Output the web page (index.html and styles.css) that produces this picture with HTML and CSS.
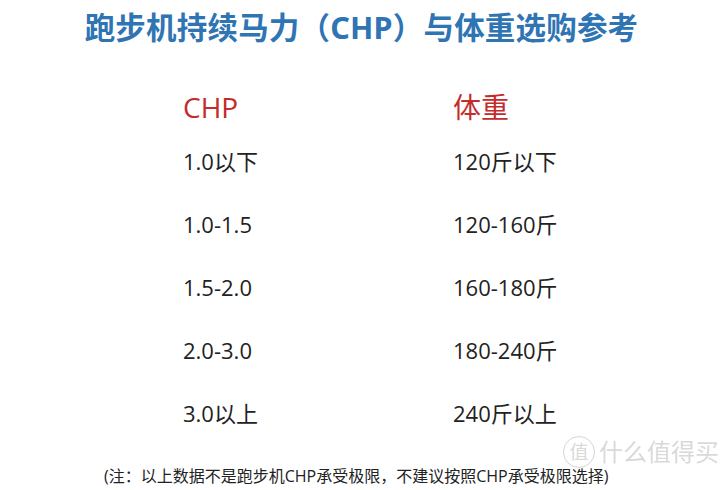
FILE: index.html
```html
<!DOCTYPE html>
<html lang="zh">
<head>
<meta charset="utf-8">
<link rel="stylesheet" href="styles.css">
</head>
<body>
<div class="page">
  <h1 class="title">跑步机持续马力（CHP）与体重选购参考</h1>
  <div class="table">
    <div class="head">CHP</div><div class="head">体重</div>
    <div class="cell">1.0以下</div><div class="cell">120斤以下</div>
    <div class="cell">1.0-1.5</div><div class="cell">120-160斤</div>
    <div class="cell">1.5-2.0</div><div class="cell">160-180斤</div>
    <div class="cell">2.0-3.0</div><div class="cell">180-240斤</div>
    <div class="cell">3.0以上</div><div class="cell">240斤以上</div>
  </div>
  <p class="note">(注：以上数据不是跑步机CHP承受极限，不建议按照CHP承受极限选择)</p>
  <div class="watermark"><span class="wm-circle">值</span><span>什么值得买</span></div>
</div>
</body>
</html>
```
FILE: styles.css
```css
html, body { margin: 0; padding: 0; background: #fff; }
body { font-family: "Open Sans", "Noto Sans CJK SC", sans-serif; width: 723px; height: 490px; overflow: hidden; }
.page { position: relative; width: 723px; height: 490px; }
.title {
  margin: 0; padding-top: 8px;
  text-align: center; color: #2f74b3;
  font-family: "Noto Sans", "Noto Sans CJK SC", sans-serif;
  font-size: 30.5px; font-weight: 700; line-height: 38px; letter-spacing: 0.2px;
}
.table {
  display: grid; grid-template-columns: 270px 200px;
  grid-template-rows: 57px; grid-auto-rows: 63px;
  padding-left: 183px; margin-top: 44px;
}
.head { color: #c42b2b; font-size: 28px; line-height: 34px; }
.cell { color: #222; font-size: 22px; line-height: 28px; }
.note {
  position: absolute; left: 104px; top: 467px; margin: 0;
  font-size: 16px; color: #222; line-height: 18px;
}
.watermark {
  position: absolute; right: 4px; top: 436px;
  color: rgba(120,120,120,0.3); font-size: 24px; line-height: 28px;
  display: flex; align-items: center; gap: 4px;
}
.wm-circle {
  display: inline-flex; width: 30px; height: 30px; border: 1.5px solid rgba(120,120,120,0.3); border-radius: 50%;
  align-items: center; justify-content: center; font-size: 19px;
}
```
